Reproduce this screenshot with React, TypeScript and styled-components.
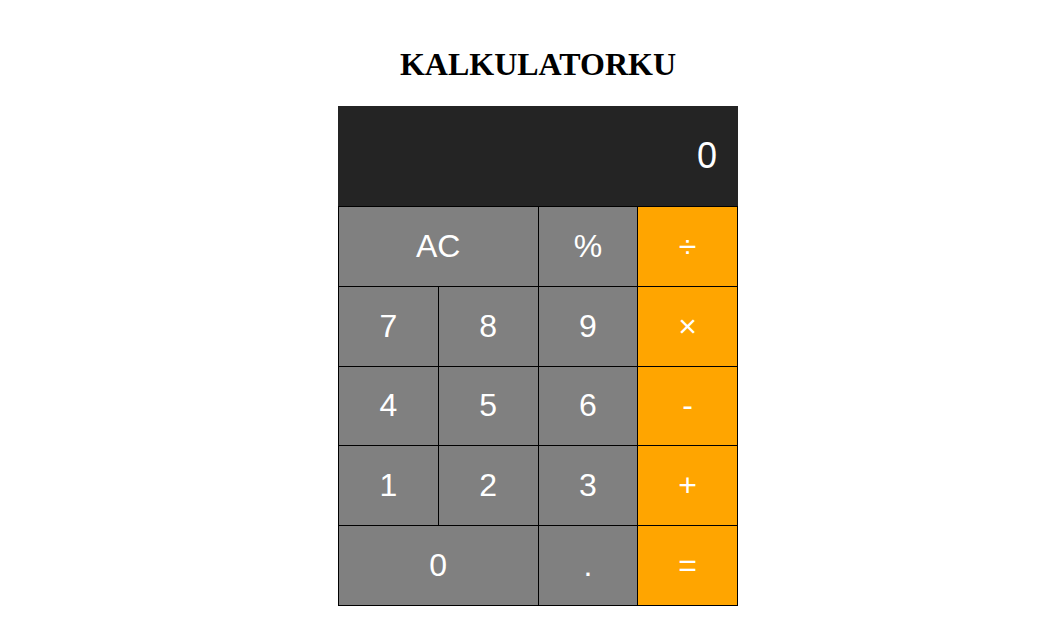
import styled, { createGlobalStyle } from "styled-components";

const GlobalStyle = createGlobalStyle`
  body {
    margin: 0;
    background: white;
    font-family: "Liberation Sans", Arial, sans-serif;
  }
`;

const Page = styled.main`
  display: flex;
  flex-direction: column;
  align-items: center;
  padding: 46px 0 0 25px;
`;

const Title = styled.h1`
  margin: 0 0 23px 0;
  font-family: "Liberation Serif", "Times New Roman", serif;
  font-size: 32px;
  font-weight: 700;
  color: black;
`;

const Calculator = styled.div`
  width: 400px;
`;

const Display = styled.div`
  height: 100px;
  background-color: #242424;
  color: white;
  font-size: 36px;
  display: flex;
  align-items: center;
  justify-content: flex-end;
  padding: 0 21px;
  box-sizing: border-box;
`;

const Keypad = styled.div`
  display: grid;
  grid-template-columns: repeat(4, 1fr);
  grid-auto-rows: 1fr;
  gap: 1px;
  height: 400px;
  box-sizing: border-box;
  border: 1px solid black;
  background-color: black;
`;

const Key = styled("button")<{ operator?: boolean; wide?: boolean }>`
  border: none;
  margin: 0;
  padding: 0;
  font-family: "Liberation Sans", Arial, sans-serif;
  font-size: 32px;
  color: white;
  background-color: ${(props) => (props.operator ? "#ffa500" : "#808080")};
  grid-column: ${(props) => (props.wide ? "span 2" : "auto")};
  cursor: pointer;
`;

const App = () => {
  return (
    <Page>
      <GlobalStyle />
      <Title>KALKULATORKU</Title>
      <Calculator>
        <Display>0</Display>
        <Keypad>
          <Key wide>AC</Key>
          <Key>%</Key>
          <Key operator>÷</Key>
          <Key>7</Key>
          <Key>8</Key>
          <Key>9</Key>
          <Key operator>×</Key>
          <Key>4</Key>
          <Key>5</Key>
          <Key>6</Key>
          <Key operator>-</Key>
          <Key>1</Key>
          <Key>2</Key>
          <Key>3</Key>
          <Key operator>+</Key>
          <Key wide>0</Key>
          <Key>.</Key>
          <Key operator>=</Key>
        </Keypad>
      </Calculator>
    </Page>
  );
};

export default App;
